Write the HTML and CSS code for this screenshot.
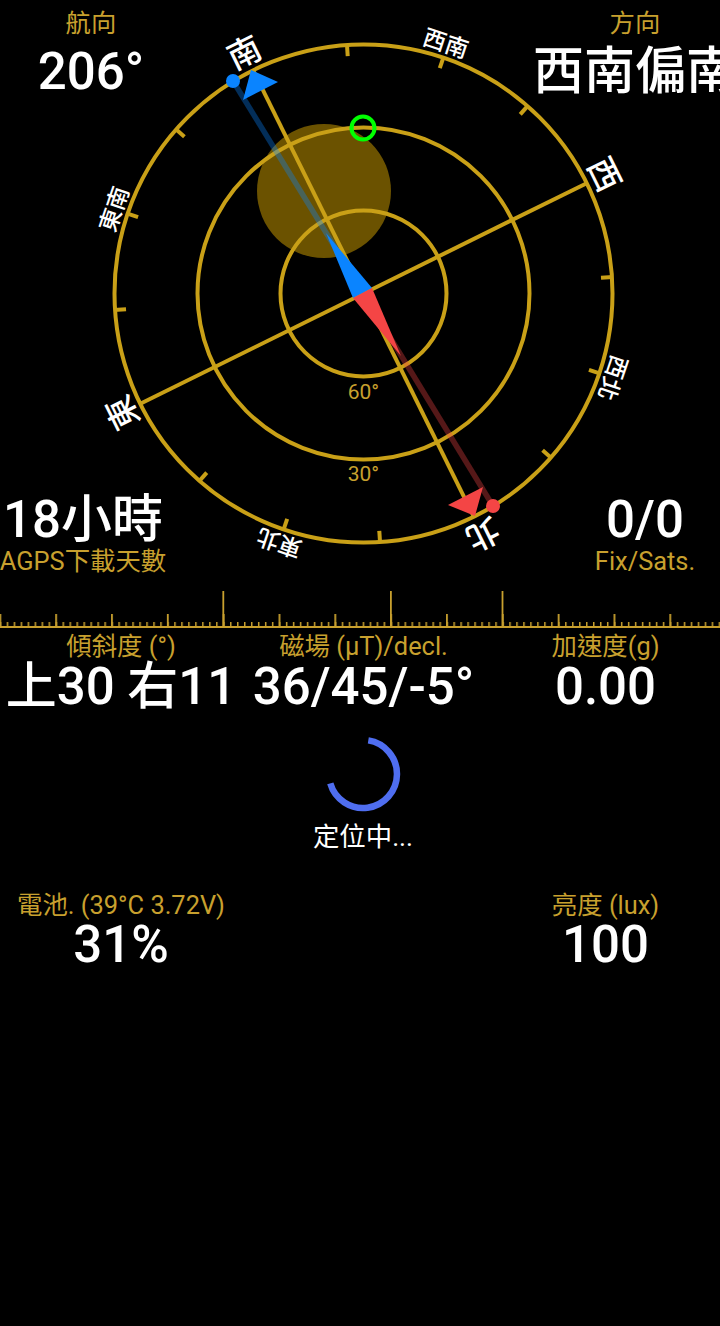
FILE: index.html
```html
<!DOCTYPE html>
<html lang="zh-Hant">
<head>
<meta charset="utf-8">
<title>GPS</title>
<link rel="stylesheet" href="styles.css">
</head>
<body>
<main class="app">
  <section class="dial">
    <svg class="compass" width="720" height="590" viewBox="0 0 720 590" aria-hidden="false">
      <circle class="sun" cx="324" cy="191" r="67"/>
      <g transform="translate(363.5 293.5)">
        <circle class="ring" r="249"/>
        <circle class="ring" r="166"/>
        <circle class="ring" r="83"/>
        <g transform="rotate(153.7)">
          <line class="axis" x1="0" y1="-249" x2="0" y2="249"/>
          <line class="axis" x1="-249" y1="0" x2="249" y2="0"/>
          <g class="ticks">
            <line y1="-250" y2="-238" transform="rotate(22.5)"/>
            <line y1="-250" y2="-238" transform="rotate(45)"/>
            <line y1="-250" y2="-238" transform="rotate(67.5)"/>
            <line y1="-250" y2="-238" transform="rotate(112.5)"/>
            <line y1="-250" y2="-238" transform="rotate(135)"/>
            <line y1="-250" y2="-238" transform="rotate(157.5)"/>
            <line y1="-250" y2="-238" transform="rotate(202.5)"/>
            <line y1="-250" y2="-238" transform="rotate(225)"/>
            <line y1="-250" y2="-238" transform="rotate(247.5)"/>
            <line y1="-250" y2="-238" transform="rotate(292.5)"/>
            <line y1="-250" y2="-238" transform="rotate(315)"/>
            <line y1="-250" y2="-238" transform="rotate(337.5)"/>
          </g>
          <text class="dir" y="-257">北</text>
          <text class="dir" y="-257" transform="rotate(90)">東</text>
          <text class="dir" y="-257" transform="rotate(180)">南</text>
          <text class="dir" y="-257" transform="rotate(270)">西</text>
          <text class="dir-sm" y="-255" transform="rotate(45)">東北</text>
          <text class="dir-sm" y="-255" transform="rotate(135)">東南</text>
          <text class="dir-sm" y="-255" transform="rotate(224.5)">西南</text>
          <text class="dir-sm" y="-255" transform="rotate(315)">西北</text>
        </g>
      </g>
      <text class="elev" x="363.5" y="399">60°</text>
      <text class="elev" x="363.5" y="481">30°</text>
      <circle class="sat" cx="363" cy="128" r="11.5"/>
      <line class="bearing-s" x1="363" y1="293" x2="233" y2="81"/>
      <line class="bearing-n" x1="363" y1="293" x2="493" y2="506"/>
      <circle class="blue" cx="233" cy="81" r="7"/>
      <circle class="red" cx="493" cy="506" r="7"/>
      <polygon class="blue" points="251,70 278,82 243,100"/>
      <polygon class="red" points="448,505 483,487 475,516"/>
      <polygon class="blue" points="353,298 372,288 326,233"/>
      <polygon class="red" points="353,298 372,288 401,356"/>
    </svg>
    <div class="corner-row top-row">
      <div class="stat w-heading"><span class="label">航向</span><span class="value">206°</span></div>
      <div class="stat w-direction"><span class="label">方向</span><span class="value">西南偏南</span></div>
    </div>
    <div class="corner-row bottom-row">
      <div class="stat w-agps"><span class="value">18小時</span><span class="label">AGPS下載天數</span></div>
      <div class="stat w-fix"><span class="value">0/0</span><span class="label">Fix/Sats.</span></div>
    </div>
  </section>

  <svg class="tape" width="720" height="40" viewBox="0 0 720 40">
    <defs>
      <pattern id="minor" patternUnits="userSpaceOnUse" x="-0.3" y="0" width="6.98" height="6"><rect width="1.5" height="6"/></pattern>
      <pattern id="medium" patternUnits="userSpaceOnUse" x="-0.6" y="0" width="55.83" height="14"><rect width="1.8" height="14"/></pattern>
    </defs>
    <rect class="t-minor" x="0" y="32" width="720" height="6"/>
    <rect class="t-medium" x="0" y="24" width="720" height="14"/>
    <rect class="t-base" x="0" y="36" width="720" height="2"/>
    <rect class="t-base" x="222.4" y="1" width="1.8" height="36"/>
    <rect class="t-base" x="390" y="1" width="1.8" height="36"/>
    <rect class="t-base" x="501.6" y="1" width="1.8" height="36"/>
  </svg>

  <section class="row tilt-row">
    <div class="stat"><span class="label">傾斜度 (°)</span><span class="value">上30 右11</span></div>
    <div class="stat"><span class="label">磁場 (µT)/decl.</span><span class="value">36/45/-5°</span></div>
    <div class="stat"><span class="label">加速度(g)</span><span class="value">0.00</span></div>
  </section>

  <section class="locating">
    <svg class="spinner" width="80" height="80" viewBox="0 0 80 80">
      <path d="M45.3 6.4 A34 34 0 1 1 7.3 49.4"/>
    </svg>
    <span class="locating-text">定位中...</span>
  </section>

  <section class="row battery-row">
    <div class="stat"><span class="label">電池. (39°C 3.72V)</span><span class="value">31%</span></div>
    <div class="stat"></div>
    <div class="stat"><span class="label">亮度 (lux)</span><span class="value">100</span></div>
  </section>
</main>
</body>
</html>
```

FILE: styles.css
```css
html, body {
  margin: 0;
  height: 100%;
  background: #000;
  overflow: hidden;
}

.app {
  width: 720px;
  height: 1326px;
  overflow: hidden;
  font-family: Roboto, "Noto Sans CJK TC", sans-serif;
  color: #fff;
}

.dial {
  position: relative;
  height: 590px;
  display: flex;
  flex-direction: column;
  justify-content: space-between;
  padding: 8px 0 14px;
  box-sizing: border-box;
}

.compass {
  position: absolute;
  left: 0;
  top: 0;
}

.corner-row {
  position: relative;
  display: flex;
  justify-content: space-between;
}

.top-row .value {
  margin-top: 6px;
}

.bottom-row .label {
  margin-top: -2px;
}

.stat {
  display: flex;
  flex-direction: column;
  align-items: center;
  white-space: nowrap;
}

.label {
  font-size: 25.4px;
  line-height: 30px;
  color: #c8a02e;
}

.value {
  font-size: 51px;
  line-height: 56px;
  font-weight: 500;
}

.w-heading { width: 182px; }
.w-direction { width: 170px; }
.w-agps { width: 166px; }
.w-fix { width: 150px; }

.ring, .axis {
  fill: none;
  stroke: #c9a017;
  stroke-width: 4;
}

.ticks line {
  stroke: #c9a017;
  stroke-width: 4;
}

.sun { fill: #6b5200; }

.dir, .dir-sm, .elev {
  text-anchor: middle;
  font-family: Roboto, "Noto Sans CJK TC", sans-serif;
}

.dir { font-size: 33px; font-weight: 500; fill: #fff; }
.dir-sm { font-size: 23px; font-weight: 500; fill: #fff; }
.elev { font-size: 21px; fill: #c8a02e; }

.sat {
  fill: none;
  stroke: #0f0;
  stroke-width: 4;
}

.blue { fill: #0a84ff; }
.red { fill: #f44545; }

.bearing-s {
  stroke: #0a84ff;
  stroke-opacity: 0.35;
  stroke-width: 5.5;
}

.bearing-n {
  stroke: #f44545;
  stroke-opacity: 0.35;
  stroke-width: 5.5;
}

.tape {
  display: block;
}

#minor rect, #medium rect, .t-base { fill: #c8a02e; }
.t-minor { fill: url(#minor); }
.t-medium { fill: url(#medium); }

.row {
  display: grid;
  grid-template-columns: 242px 243px 241px;
}

.tilt-row {
  margin-top: 3px;
}

.tilt-row .value {
  margin-top: 1px;
}

.tilt-row .label,
.battery-row .label {
  line-height: 27px;
}

.tilt-row .value,
.battery-row .value {
  line-height: 52px;
}

.locating {
  display: flex;
  flex-direction: column;
  align-items: center;
  margin-top: 21px;
}

.spinner {
  display: block;
  margin-left: 6px;
}

.spinner path {
  fill: none;
  stroke: #4f6ef0;
  stroke-width: 6.5;
}

.locating-text {
  font-size: 26.4px;
  line-height: 32px;
  margin-top: 7px;
  margin-left: 6px;
}

.battery-row {
  margin-top: 39px;
}
```
